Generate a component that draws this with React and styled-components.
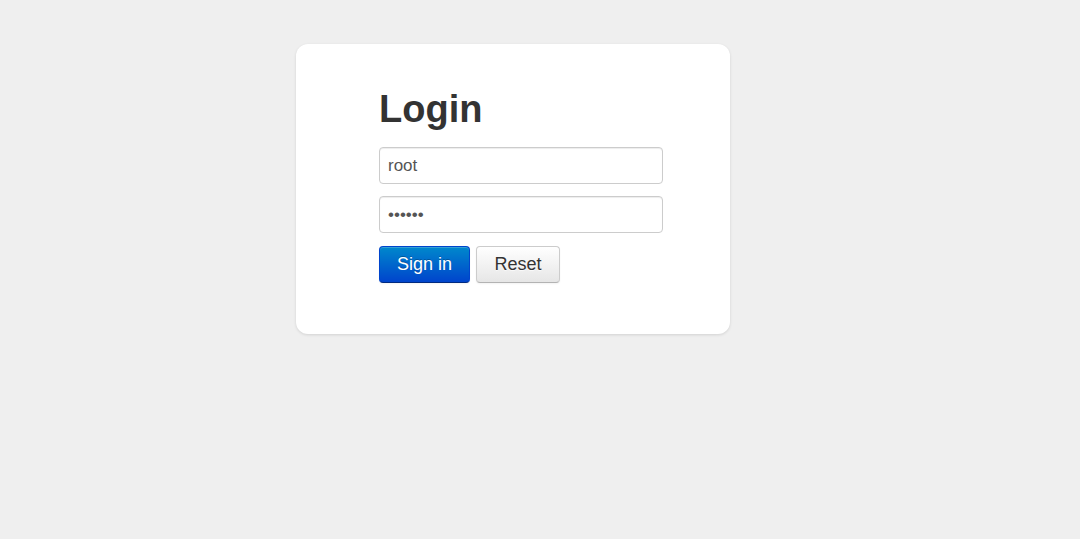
import React, { useState } from "react";
import styled, { createGlobalStyle } from "styled-components";

const GlobalStyle = createGlobalStyle`
  html, body {
    margin: 0;
    padding: 0;
    background: #efefef;
    font-family: "Liberation Sans", Arial, sans-serif;
  }
`;

const Page = styled.div`
  min-height: 539px;
  padding: 44px 0 0 296px;
  box-sizing: border-box;
`;

const Card = styled.form`
  width: 434px;
  box-sizing: border-box;
  padding: 44px 67px 51px 83px;
  background: #fff;
  border-radius: 12px;
  box-shadow: 0 1px 3px rgba(0, 0, 0, 0.12);
`;

const Title = styled.h1`
  margin: 0 0 17px;
  font-size: 38px;
  line-height: 42px;
  font-weight: bold;
  color: #333;
`;

const Field = styled.input`
  display: block;
  width: 284px;
  height: 37px;
  box-sizing: border-box;
  margin: 0 0 ${(p) => p.$gap}px;
  padding: 0 8px;
  font-family: inherit;
  font-size: 17px;
  color: #555;
  background: #fff;
  border: 1px solid #cccccc;
  border-radius: 4px;
  box-shadow: inset 0 1px 1px rgba(0, 0, 0, 0.075);
  outline: none;
`;

const Actions = styled.div`
  display: flex;
  gap: 6px;
`;

const Button = styled.button`
  height: 37px;
  padding: 0 ${(p) => (p.$primary ? 17 : 17.5)}px;
  box-sizing: border-box;
  font-family: inherit;
  font-size: 18px;
  border-radius: 4px;
  cursor: pointer;
  color: ${(p) => (p.$primary ? "#fff" : "#333")};
  text-shadow: ${(p) =>
    p.$primary ? "0 -1px 0 rgba(0,0,0,0.25)" : "0 1px 1px rgba(255,255,255,0.75)"};
  background: ${(p) =>
    p.$primary
      ? "linear-gradient(to bottom, #0088cc, #0044cc)"
      : "linear-gradient(to bottom, #ffffff, #e6e6e6)"};
  border: 1px solid
    ${(p) => (p.$primary ? "#0044cc" : "#cccccc")};
  border-bottom-color: ${(p) => (p.$primary ? "#002a80" : "#b3b3b3")};
  box-shadow: inset 0 1px 0 rgba(255, 255, 255, 0.2),
    0 1px 2px rgba(0, 0, 0, 0.05);
`;

export default function App() {
  const [user, setUser] = useState("root");
  const [pass, setPass] = useState("secret");

  return (
    <>
      <GlobalStyle />
      <Page>
        <Card onSubmit={(e) => e.preventDefault()}>
          <Title>Login</Title>
          <Field $gap={12} value={user} onChange={(e) => setUser(e.target.value)} />
          <Field
            $gap={13}
            type="password"
            value={pass}
            onChange={(e) => setPass(e.target.value)}
          />
          <Actions>
            <Button $primary type="submit">Sign in</Button>
            <Button type="reset" onClick={() => { setUser(""); setPass(""); }}>
              Reset
            </Button>
          </Actions>
        </Card>
      </Page>
    </>
  );
}
